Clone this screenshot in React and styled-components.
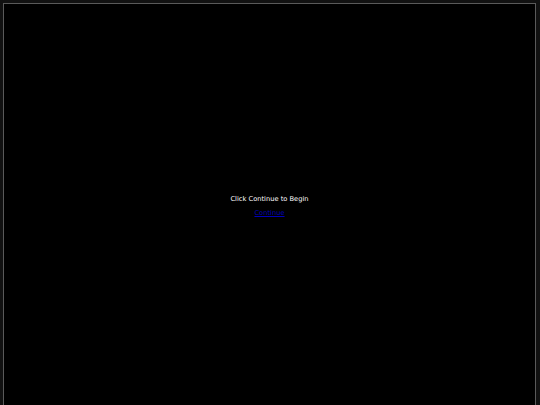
import React from "react";
import styled, { createGlobalStyle } from "styled-components";

const Global = createGlobalStyle`
  html, body { margin: 0; padding: 0; background: #111; overflow: hidden; }
  body { font-family: "DejaVu Sans", sans-serif; }
`;

const Page = styled.div`
  padding: 3px 4px 0 3px;
  height: 405px;
  box-sizing: border-box;
`;

const Stage = styled.div`
  height: 420px;
  background: #000;
  border: 1px solid #5a5a5a;
  display: flex;
  flex-direction: column;
  align-items: center;
  padding-top: 191px;
  box-sizing: border-box;
`;

const Prompt = styled.div`
  color: #fff;
  font-size: 6.7px;
  line-height: 9px;
`;

const Link = styled.a`
  margin-top: 5px;
  color: #0000bb;
  font-size: 6.7px;
  line-height: 9px;
  text-decoration: underline;
`;

export default function App() {
  return (
    <>
      <Global />
      <Page>
        <Stage>
          <Prompt>Click Continue to Begin</Prompt>
          <Link href="#">Continue</Link>
        </Stage>
      </Page>
    </>
  );
}
